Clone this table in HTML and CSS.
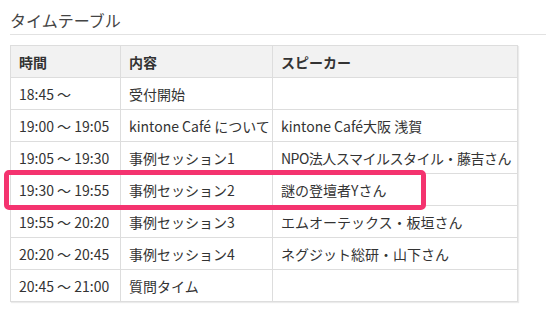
FILE: index.html
```html
<!DOCTYPE html>
<html lang="ja">
<head>
<meta charset="utf-8">
<link rel="stylesheet" href="styles.css">
</head>
<body>
<div class="page">
  <h2 class="title">タイムテーブル</h2>
  <table class="schedule">
    <colgroup>
      <col class="c-time">
      <col class="c-content">
      <col class="c-speaker">
    </colgroup>
    <thead>
      <tr><th>時間</th><th>内容</th><th>スピーカー</th></tr>
    </thead>
    <tbody>
      <tr><td>18:45 〜</td><td>受付開始</td><td></td></tr>
      <tr><td>19:00 〜 19:05</td><td>kintone Café について</td><td>kintone Café大阪 浅賀</td></tr>
      <tr><td>19:05 〜 19:30</td><td>事例セッション1</td><td class="tight">NPO法人スマイルスタイル・藤吉さん</td></tr>
      <tr><td>19:30 〜 19:55</td><td>事例セッション2</td><td>謎の登壇者Yさん</td></tr>
      <tr><td>19:55 〜 20:20</td><td>事例セッション3</td><td>エムオーテックス・板垣さん</td></tr>
      <tr><td>20:20 〜 20:45</td><td>事例セッション4</td><td>ネグジット総研・山下さん</td></tr>
      <tr><td>20:45 〜 21:00</td><td>質問タイム</td><td></td></tr>
    </tbody>
  </table>
  <div class="highlight"></div>
</div>
</body>
</html>
```

FILE: styles.css
```css
html, body {
  margin: 0;
  padding: 0;
  background: #ffffff;
}

body {
  font-family: "Noto Sans CJK JP", "Noto Sans", sans-serif;
  color: #333333;
  width: 546px;
  height: 315px;
  overflow: hidden;
}

.page {
  position: relative;
  padding-left: 10px;
}

.title {
  margin: 0;
  padding: 8px 0 2px 0;
  font-size: 16px;
  line-height: 24px;
  font-weight: normal;
  color: #444444;
  border-bottom: 1px solid #e2e2e2;
}

.schedule {
  margin-top: 10px;
  width: 507px;
  table-layout: fixed;
  border-collapse: collapse;
  font-size: 14px;
  box-shadow: 1px 1px 1px rgba(0, 0, 0, 0.08);
}

.c-time { width: 110px; }
.c-content { width: 152px; }
.c-speaker { width: 245px; }

.schedule th,
.schedule td {
  border: 1px solid #dddddd;
  padding: 0 8px;
  height: 31px;
  line-height: 20px;
  text-align: left;
  white-space: nowrap;
}

.schedule td.tight {
  letter-spacing: -0.5px;
}

.schedule th {
  background: #f2f2f2;
  font-weight: bold;
}

.highlight {
  position: absolute;
  left: 4px;
  top: 170px;
  width: 422px;
  height: 40px;
  box-sizing: border-box;
  border: 5px solid #f4336f;
  border-radius: 5px;
}
```
